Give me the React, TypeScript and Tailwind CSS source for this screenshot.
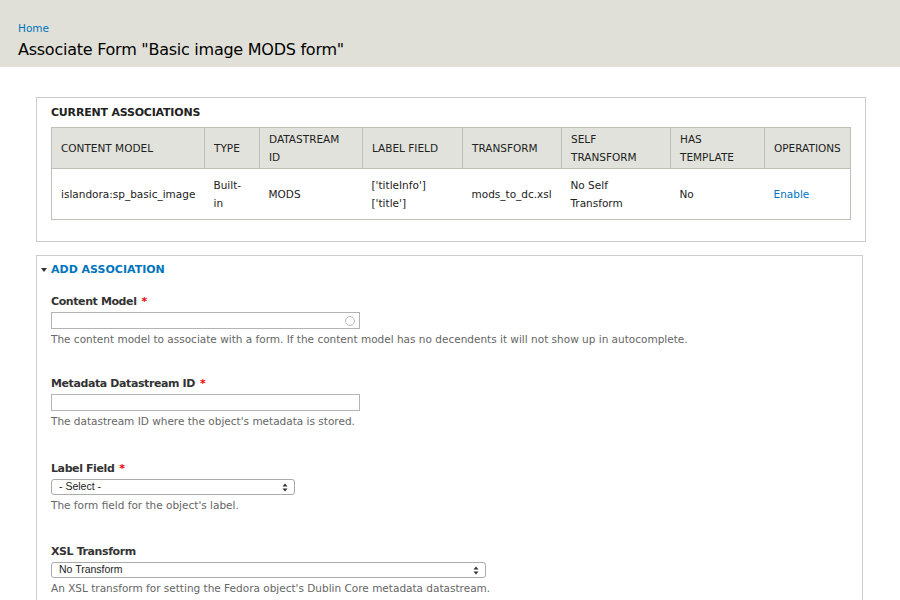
import React from 'react';

const font = { fontFamily: '"DejaVu Sans", Verdana, sans-serif' };

const cols = [
  { h: 'CONTENT MODEL', w: 'w-[153px]', v: 'islandora:sp_basic_image' },
  { h: 'TYPE', w: 'w-[55px]', v: 'Built-\nin' },
  { h: 'DATASTREAM\nID', w: 'w-[103px]', v: 'MODS' },
  { h: 'LABEL FIELD', w: 'w-[100px]', v: "['titleInfo']\n['title']" },
  { h: 'TRANSFORM', w: 'w-[99px]', v: 'mods_to_dc.xsl' },
  { h: 'SELF\nTRANSFORM', w: 'w-[109px]', v: 'No Self\nTransform' },
  { h: 'HAS\nTEMPLATE', w: 'w-[94px]', v: 'No' },
  { h: 'OPERATIONS', w: 'w-[86px]', v: 'Enable' },
];

const Arrows = () => (
  <svg width="6" height="9" viewBox="0 0 6 9" className="mr-[6px]">
    <path d="M3 0.5 L5.5 3.5 H0.5 Z" fill="#333" />
    <path d="M3 8.5 L5.5 5.5 H0.5 Z" fill="#333" />
  </svg>
);

const Label = ({ text, required }: { text: string; required?: boolean }) => (
  <div className="text-[11px] font-bold text-[#333] leading-[18px] tracking-[-0.4px] mb-[1px]">
    {text}
    {required && <span className="text-[#e00] ml-[5px]">*</span>}
  </div>
);

const Desc = ({ text }: { text: string }) => (
  <div className="text-[10.5px] text-[#666] leading-[18px] mt-[1px]">{text}</div>
);

const selectFont = { fontFamily: '"Liberation Sans", Arial, sans-serif' };

export default function App() {
  return (
    <div className="min-h-[600px] bg-white text-[#333]" style={font}>
      <div className="bg-[#e0e0d8] h-[67px] px-[18px] pt-[20px]">
        <a className="block text-[10.5px] text-[#0074bd] leading-[16px]">Home</a>
        <h1 className="text-[16px] leading-[24px] tracking-[-0.25px] text-black mt-[2px] font-normal">Associate Form "Basic image MODS form"</h1>
      </div>

      <div className="pl-[36px] pr-[37px] pt-[30px]">
        <fieldset className="border border-[#ccc] px-[14px] pt-[6px] pb-[21px]">
          <div className="text-[11px] font-bold text-[#222] leading-[18px] tracking-[-0.2px] mb-[5px]">CURRENT ASSOCIATIONS</div>
          <table className="table-fixed border-collapse border border-[#bebfb9] text-[10.5px] leading-[18px] w-[799px]">
            <thead>
              <tr className="bg-[#e1e2dc] h-[41px]">
                {cols.map((c) => (
                  <th key={c.h} className={`${c.w} border border-[#bebfb9] text-left font-normal text-[#222] px-[9px] whitespace-pre-line align-middle`}>
                    {c.h}
                  </th>
                ))}
              </tr>
            </thead>
            <tbody>
              <tr className="h-[51px]">
                {cols.map((c) => (
                  <td key={c.h} className={`px-[9px] whitespace-pre-line align-middle ${c.v === 'Enable' ? 'text-[#0074bd]' : 'text-[#222]'}`}>
                    {c.v}
                  </td>
                ))}
              </tr>
            </tbody>
          </table>
        </fieldset>

        <fieldset className="border border-[#ccc] border-b-0 mt-[13px] px-[14px] pt-[5px] pb-[20px]">
          <div className="flex items-center -ml-[10px] text-[11px] font-bold text-[#0074bd] leading-[18px]">
            <svg width="6" height="4" viewBox="0 0 6 4" className="mr-[4px]">
              <path d="M0 0 H6 L3 4 Z" fill="#333" />
            </svg>
            ADD ASSOCIATION
          </div>

          <div className="mt-[14px]">
            <Label text="Content Model" required />
            <div className="w-[309px] h-[17px] border border-[#b3b3b3] flex items-center justify-end pr-[4px]">
              <span className="w-[10px] h-[10px] rounded-full border border-[#bbb]" />
            </div>
            <Desc text="The content model to associate with a form. If the content model has no decendents it will not show up in autocomplete." />
          </div>

          <div className="mt-[27px]">
            <Label text="Metadata Datastream ID" required />
            <div className="w-[309px] h-[17px] border border-[#b3b3b3] mt-[1px]" />
            <Desc text="The datastream ID where the object's metadata is stored." />
          </div>

          <div className="mt-[30px]">
            <Label text="Label Field" required />
            <div className="w-[244px] h-[16px] border border-[#aaa] rounded-[3px] flex items-center justify-between text-[10.5px] text-[#222] pl-[7px]" style={selectFont}>
              - Select -
              <Arrows />
            </div>
            <Desc text="The form field for the object's label." />
          </div>

          <div className="mt-[29px]">
            <Label text="XSL Transform" />
            <div className="w-[435px] h-[16px] border border-[#aaa] rounded-[3px] flex items-center justify-between text-[10.5px] text-[#222] pl-[7px]" style={selectFont}>
              No Transform
              <Arrows />
            </div>
            <Desc text="An XSL transform for setting the Fedora object's Dublin Core metadata datastream." />
          </div>
        </fieldset>
      </div>
    </div>
  );
}
